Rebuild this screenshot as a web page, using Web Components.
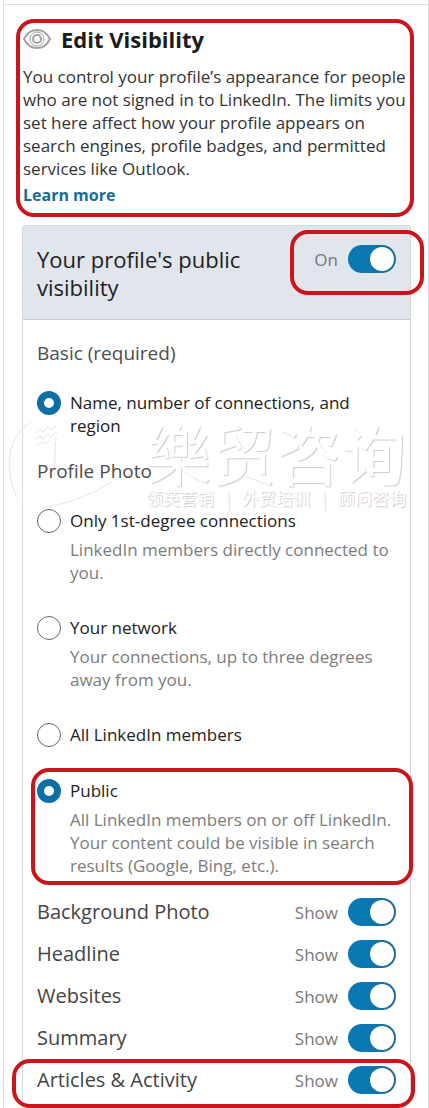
<!DOCTYPE html>
<html lang="en">
<head>
<meta charset="utf-8">
<meta name="viewport" content="width=device-width, initial-scale=1">
<title>Edit Visibility</title>
<style>
body { margin: 0; background: #fff; color: #222; font: 17px/23px "Open Sans", "Noto Sans", sans-serif; }
</style>
</head>
<body>
<settings-panel>
  <call-out class="intro">
    <visibility-intro></visibility-intro>
  </call-out>
  <visibility-card>
    <toggle-switch slot="master" label="On"></toggle-switch>
    <brand-watermark slot="watermark"></brand-watermark>
    <option-group heading="Basic (required)">
      <radio-option group="basic" label="Name, number of connections, and region" checked></radio-option>
    </option-group>
    <option-group heading="Profile Photo">
      <radio-option group="photo" label="Only 1st-degree connections">LinkedIn members directly connected to you.</radio-option>
      <radio-option group="photo" label="Your network">Your connections, up to three degrees away from you.</radio-option>
      <radio-option group="photo" label="All LinkedIn members"></radio-option>
      <call-out style="--top:-11px;--right:-17px;--bottom:-8px;--left:-6px">
        <radio-option group="photo" label="Public" checked>All LinkedIn members on or off LinkedIn. Your content could be visible in search results (Google, Bing, etc.).</radio-option>
      </call-out>
    </option-group>
    <section-row slot="rows" name="Background Photo"></section-row>
    <section-row slot="rows" name="Headline"></section-row>
    <section-row slot="rows" name="Websites"></section-row>
    <section-row slot="rows" name="Summary"></section-row>
    <call-out slot="rows" style="--top:0px;--right:-19px;--bottom:-7px;--left:-25px">
      <section-row name="Articles &amp; Activity"></section-row>
    </call-out>
  </visibility-card>
</settings-panel>

<script>
function define(name, render) {
  customElements.define(name, class extends HTMLElement {
    constructor() {
      super();
      this.attachShadow({ mode: 'open' });
    }
    connectedCallback() {
      this.shadowRoot.innerHTML = render(this);
    }
  });
}
const attr = (el, name) => (el.getAttribute(name) || '').replace(/&/g, '&amp;').replace(/</g, '&lt;').replace(/"/g, '&quot;');

define('settings-panel', () => `
  <style>
    :host { display: block; margin-left: 3px; border: solid #dcdade; border-width: 0 1px; }
    .edge { height: 4px; border-bottom: 1px solid #e0dee0; }
    main { padding: 20px 17px 7px 18px; }
  </style>
  <div class="edge"></div>
  <main><slot></slot></main>`);

/* Red hand-drawn style highlight laid over whatever it wraps. */
define('call-out', () => `
  <style>
    :host { display: block; position: relative; }
    :host(.intro) { --top: -6px; --right: -3px; --bottom: -10px; --left: -6px; }
    .ring { position: absolute; z-index: 2; top: var(--top); right: var(--right); bottom: var(--bottom); left: var(--left);
      box-sizing: border-box; border: 4px solid #cb151d; border-radius: 18px; pointer-events: none; }
  </style>
  <slot></slot><div class="ring"></div>`);

define('visibility-intro', () => `
  <style>
    :host { display: block; padding-left: 1px; }
    header { display: flex; align-items: center; gap: 10px; margin-bottom: 12px; }
    h1 { margin: 0; font-size: 22px; line-height: 28px; font-weight: 700; color: #1b1b1b; }
    p { margin: 0 0 3px; color: #333; }
    a { font-size: 16px; color: #1a6c93; font-weight: 700; text-decoration: none; }
    svg { flex: none; }
  </style>
  <header>
    <svg width="28" height="20" viewBox="0 0 28 20" fill="none" stroke="#a2a2a2" stroke-width="2" aria-hidden="true">
      <path d="M1 10C4 4 9 1 14 1s10 3 13 9c-3 6-8 9-13 9S4 16 1 10Z"/>
      <circle cx="14" cy="10" r="7" stroke-width="1"/><circle cx="14" cy="10" r="4"/>
    </svg>
    <h1>Edit Visibility</h1>
  </header>
  <p>You control your profile’s appearance for people who are not signed in to LinkedIn. The limits you set here affect how your profile appears on search engines, profile badges, and permitted services like Outlook.</p>
  <a href="#learn">Learn more</a>`);

define('visibility-card', () => `
  <style>
    :host { display: block; position: relative; margin-top: 18px; border: 1px solid #d5d8dd; border-bottom: 0; border-radius: 3px 3px 0 0; }
    header { display: flex; justify-content: space-between; align-items: flex-start; gap: 16px;
      padding: 19px 14px 18px; background: #e1e5ec; border-bottom: 1px solid #c3cbd2; }
    h2 { margin: 0; font-size: 22px; line-height: 28px; font-weight: 400; color: #222; }
    .body { padding: 19px 14px 0; }
    .rows { margin-top: 14px; }
  </style>
  <slot name="watermark"></slot>
  <header><h2>Your profile's public visibility</h2>
    <call-out style="--top:-15px;--right:-28px;--bottom:-22px;--left:-24px"><slot name="master"></slot></call-out>
  </header>
  <div class="body">
    <slot></slot>
    <div class="rows"><slot name="rows"></slot></div>
  </div>`);

define('toggle-switch', el => `
  <style>
    :host { display: block; }
    label { display: flex; align-items: center; gap: 10px; color: #777; }
    input { appearance: none; flex: none; box-sizing: border-box; width: 48px; height: 28px; margin: 0; padding: 2px;
      border-radius: 14px; background: linear-gradient(90deg, #0a78b3 40%, #1f6a92); display: flex; justify-content: flex-start; }
    input:checked { justify-content: flex-end; }
    input::before { content: ""; width: 24px; height: 24px; border-radius: 50%; background: #fff; }
  </style>
  <label>${attr(el, 'label')}<input type="checkbox" role="switch" checked></label>`);

define('option-group', el => `
  <style>
    :host { display: block; position: relative; }
    :host(:not(:first-of-type)) { margin-top: 20px; }
    fieldset { margin: 0; padding: 0; border: 0; min-width: 0; }
    legend { padding: 0; margin-bottom: 24px; font-size: 19px; line-height: 28px; color: #4d4d4d; }
    .options { display: grid; gap: 32px; }
  </style>
  <fieldset><legend>${attr(el, 'heading')}</legend><div class="options"><slot></slot></div></fieldset>`);

define('radio-option', el => `
  <style>
    :host { display: block; }
    label { display: grid; grid-template-columns: 24px 1fr; column-gap: 9px; color: #222; }
    input { appearance: none; box-sizing: border-box; width: 24px; height: 24px; margin: 0;
      border: 1px solid #666; border-radius: 50%; background: #fff; }
    input:checked { border: 7px solid #0c70a5; }
    p { margin: 5px 0 0 33px; color: #7c7c7c; }
  </style>
  <label><input type="radio" name="${attr(el, 'group')}"${el.hasAttribute('checked') ? ' checked' : ''}><span>${attr(el, 'label')}</span></label>
  ${el.textContent.trim() ? '<p><slot></slot></p>' : ''}`);

define('section-row', el => `
  <style>
    :host { display: flex; align-items: center; justify-content: space-between; height: 42px; }
    h3 { margin: 0; font-size: 20px; line-height: 28px; font-weight: 400; color: #444; }
  </style>
  <h3>${attr(el, 'name')}</h3><toggle-switch label="Show"></toggle-switch>`);

define('brand-watermark', () => `
  <style>
    :host { position: absolute; top: 165px; left: -16px; right: 4px; display: flex; justify-content: space-between;
      pointer-events: none; font-family: "Noto Sans CJK SC", sans-serif; }
    svg { flex: none; }
    .words { color: #fff; text-shadow: 1px 1px 1px #cfcad1; white-space: nowrap; padding-top: 25px; }
    .name { font-size: 65px; line-height: 72px; }
    .tags { display: flex; justify-content: space-between; font-size: 17px; line-height: 20px; }
  </style>
  <svg width="120" height="120" viewBox="0 0 120 120" fill="none" stroke="#e8e5ea" aria-hidden="true">
    <path d="M26 29Q2 46 2 72q1 22 8 34M49 46l-2 39M108 74v14"/>
    <path d="M36 117q42-8 70-27"/>
    <path d="M28 42l5-4 3 3 5-5 3 3 6-5M28 49l5-4 3 3 5-5 3 3 6-5M30 55l5-4 3 2 5-4"/>
  </svg>
  <div class="words">
    <div class="name">樂贸咨询</div>
    <div class="tags"><span>领英营销</span><span>|</span><span>外贸培训</span><span>|</span><span>顾问咨询</span></div>
  </div>`);
</script>
</body>
</html>
